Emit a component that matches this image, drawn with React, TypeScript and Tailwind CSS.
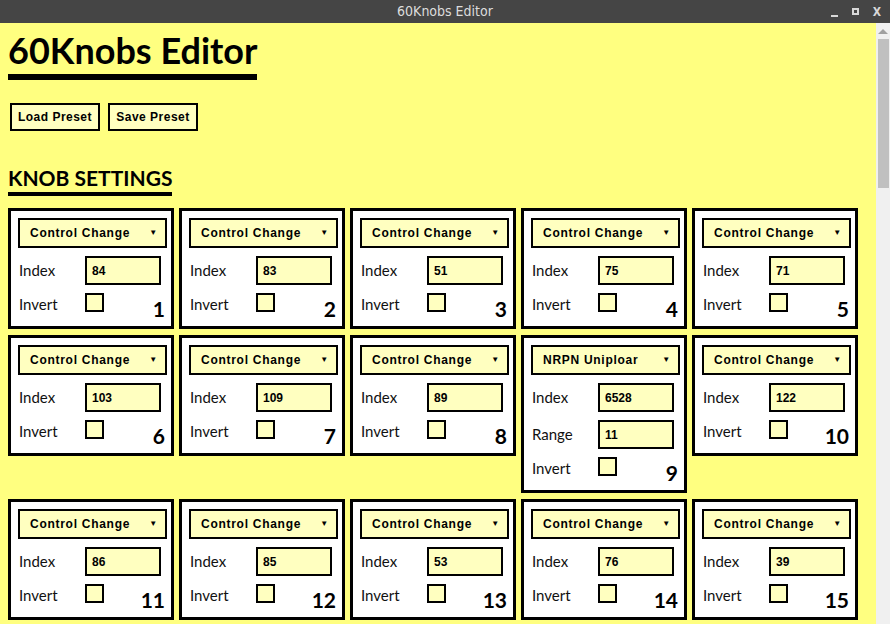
import React from "react";

type Knob = {
  n: number;
  mode: string;
  index: number;
  range?: number;
};

const knobs: Knob[] = [
  { n: 1, mode: "Control Change", index: 84 },
  { n: 2, mode: "Control Change", index: 83 },
  { n: 3, mode: "Control Change", index: 51 },
  { n: 4, mode: "Control Change", index: 75 },
  { n: 5, mode: "Control Change", index: 71 },
  { n: 6, mode: "Control Change", index: 103 },
  { n: 7, mode: "Control Change", index: 109 },
  { n: 8, mode: "Control Change", index: 89 },
  { n: 9, mode: "NRPN Uniploar", index: 6528, range: 11 },
  { n: 10, mode: "Control Change", index: 122 },
  { n: 11, mode: "Control Change", index: 86 },
  { n: 12, mode: "Control Change", index: 85 },
  { n: 13, mode: "Control Change", index: 53 },
  { n: 14, mode: "Control Change", index: 76 },
  { n: 15, mode: "Control Change", index: 39 },
];

const arial = { fontFamily: '"Liberation Sans", Arial, sans-serif' };
const sans = { fontFamily: 'Lato, "Noto Sans", sans-serif' };

function Field({ label, value }: { label: string; value: number }) {
  return (
    <div className="flex items-center h-[29px]">
      <span className="w-[67px] pl-[1px] text-[15px] text-[#111]" style={sans}>
        {label}
      </span>
      <div
        className="w-[76px] h-[29px] border-2 border-black bg-[#ffffc0] flex items-center pl-[5px] text-[12px] font-bold"
        style={arial}
      >
        {value}
      </div>
    </div>
  );
}

function KnobCard({ k }: { k: Knob }) {
  return (
    <div className="relative w-[166px] border-[3px] border-black bg-white pt-[7px] pl-[7px] pr-[4px] pb-[14px]">
      <div
        className="h-[30px] border-2 border-black bg-[#ffffc0] flex items-center justify-between pl-[10px] pr-[7px] text-[12px] font-bold tracking-[0.06em]"
        style={arial}
      >
        <span>{k.mode}</span>
        <span className="text-[8px]">▼</span>
      </div>
      <div className="mt-[8px] flex flex-col gap-[8px]">
        <Field label="Index" value={k.index} />
        {k.range !== undefined && <Field label="Range" value={k.range} />}
        <div className="flex items-center h-[19px]">
          <span className="w-[67px] pl-[1px] text-[15px] text-[#111] mt-[3px]" style={sans}>
            Invert
          </span>
          <div className="w-[19px] h-[19px] border-2 border-black bg-[#ffffc0]" />
        </div>
      </div>
      <span
        className="absolute right-[6px] bottom-[7px] text-[21px] font-bold leading-none"
        style={sans}
      >
        {k.n}
      </span>
    </div>
  );
}

export default function App() {
  return (
    <div className="w-[890px] h-[624px] overflow-hidden flex flex-col">
      <div
        className="relative h-[23px] bg-[#454545] flex items-center justify-center text-[#dcdcdc] text-[14px]"
        style={{ fontFamily: '"DejaVu Sans", sans-serif', fontStretch: "condensed" }}
      >
        60Knobs Editor
        <div className="absolute right-[9px] top-0 h-[23px] flex items-center gap-[14px] text-[12px] text-[#d8d8d8]">
          <span className="w-[7px] h-[2px] bg-[#d8d8d8] mt-[8px]" />
          <span className="w-[7px] h-[7px] border-2 border-[#d8d8d8]" />
          <span className="font-bold">X</span>
        </div>
      </div>
      <div className="flex flex-1 min-h-0">
        <div className="flex-1 bg-[#ffff80] overflow-hidden pl-[8px]">
          <h1
            className="inline-block mt-[9px] text-[36px] leading-[36px] font-bold pb-[6px] border-b-[6px] border-black"
            style={sans}
          >
            60Knobs Editor
          </h1>
          <div className="flex gap-[8px] mt-[23px] ml-[2px]">
            {["Load Preset", "Save Preset"].map((t) => (
              <button
                key={t}
                className="w-[90px] h-[28px] border-2 border-black bg-[#ffffc0] text-[12px] font-bold tracking-[0.04em]"
                style={arial}
              >
                {t}
              </button>
            ))}
          </div>
          <div>
            <h2
              className="inline-block mt-[36px] text-[21px] leading-[21px] font-bold pb-[4px] border-b-4 border-black"
              style={sans}
            >
              KNOB SETTINGS
            </h2>
          </div>
          <div className="mt-[12px] flex flex-wrap items-start gap-x-[5px] gap-y-[6px] w-[860px]">
            {knobs.map((k) => (
              <KnobCard key={k.n} k={k} />
            ))}
          </div>
        </div>
        <div className="w-[14px] bg-[#f0f0f0] flex flex-col items-center">
          <div className="mt-[6px] w-0 h-0 border-l-[5px] border-r-[5px] border-b-[5px] border-l-transparent border-r-transparent border-b-[#a0a0a0]" />
          <div className="mt-[5px] w-[11px] h-[149px] bg-[#c0c0c0]" />
        </div>
      </div>
    </div>
  );
}
